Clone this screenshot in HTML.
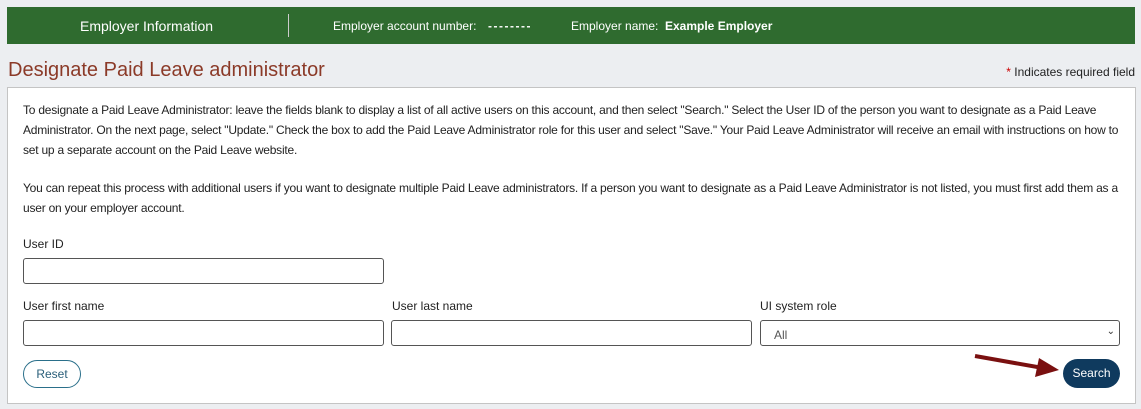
<!DOCTYPE html>
<html><head><style>
body{margin:0;width:1141px;height:409px;background:#eceef1;font-family:"Liberation Sans",sans-serif;position:relative;overflow:hidden}
.bar{position:absolute;left:7px;top:7px;width:1128px;height:37px;background:#2f6b2f;color:#fff}
.bar span{position:absolute;top:12px;font-size:12px}
.title{position:absolute;left:8px;top:59px;font-size:20px;color:#8b3a28}
.req{position:absolute;right:6px;top:65px;font-size:12px;color:#222}
.panel{position:absolute;left:7px;top:87px;width:1127px;height:315px;background:#fff;border:1px solid #c4c4c4}
p{position:absolute;left:15px;margin:0;font-size:12px;line-height:20px;color:#222;width:1106px;letter-spacing:-0.22px}
.lbl{position:absolute;font-size:12px;color:#222}
.in{position:absolute;height:26px;border:1px solid #555;border-radius:3px;background:#fff;box-sizing:border-box}
</style></head><body>
<div class="bar">
<span style="left:73px;font-size:14px;top:11px">Employer Information</span>
<div style="position:absolute;left:281px;top:7px;width:1px;height:23px;background:#ccc"></div>
<span style="left:326px">Employer account number:</span>
<span style="left:481px;font-weight:bold;letter-spacing:1.5px">--------</span>
<span style="left:564px">Employer name:</span>
<span style="left:658px;font-weight:bold">Example Employer</span>
</div>
<div class="title">Designate Paid Leave administrator</div>
<div class="req"><span style="color:#c00">*</span> Indicates required field</div>
<div class="panel">
<p style="top:12px">To designate a Paid Leave Administrator: leave the fields blank to display a list of all active users on this account, and then select "Search." Select the User ID of the person you want to designate as a Paid Leave Administrator. On the next page, select "Update." Check the box to add the Paid Leave Administrator role for this user and select "Save." Your Paid Leave Administrator will receive an email with instructions on how to set up a separate account on the Paid Leave website.</p>
<p style="top:90px">You can repeat this process with additional users if you want to designate multiple Paid Leave administrators. If a person you want to designate as a Paid Leave Administrator is not listed, you must first add them as a user on your employer account.</p>
<div class="lbl" style="left:15px;top:149px">User ID</div>
<div class="in" style="left:15px;top:170px;width:361px"></div>
<div class="lbl" style="left:15px;top:211px">User first name</div>
<div class="in" style="left:15px;top:232px;width:361px"></div>
<div class="lbl" style="left:384px;top:211px">User last name</div>
<div class="in" style="left:383px;top:232px;width:361px"></div>
<div class="lbl" style="left:752px;top:211px">UI system role</div>
<div class="in" style="left:752px;top:232px;width:360px;font-size:12px;color:#555;padding:7px 0 0 13px">All<span style="position:absolute;right:4px;top:5px;font-size:10px;color:#333">&#8964;</span></div>
<div style="position:absolute;left:15px;top:272px;width:56px;height:26px;border:1px solid #2a6f8a;border-radius:14px;font-size:12px;color:#2a5f7a;text-align:center;line-height:26px">Reset</div>
<svg style="position:absolute;left:965px;top:262px" width="90" height="30"><line x1="2" y1="6" x2="70" y2="18" stroke="#7a1010" stroke-width="4"/><polygon points="66,8 86,20 62,27" fill="#7a1010"/></svg>
<div style="position:absolute;left:1055px;top:271px;width:57px;height:29px;background:#0f3a5e;border-radius:15px;color:#fff;font-size:12px;text-align:center;line-height:29px">Search</div>
</div>
</body></html>
